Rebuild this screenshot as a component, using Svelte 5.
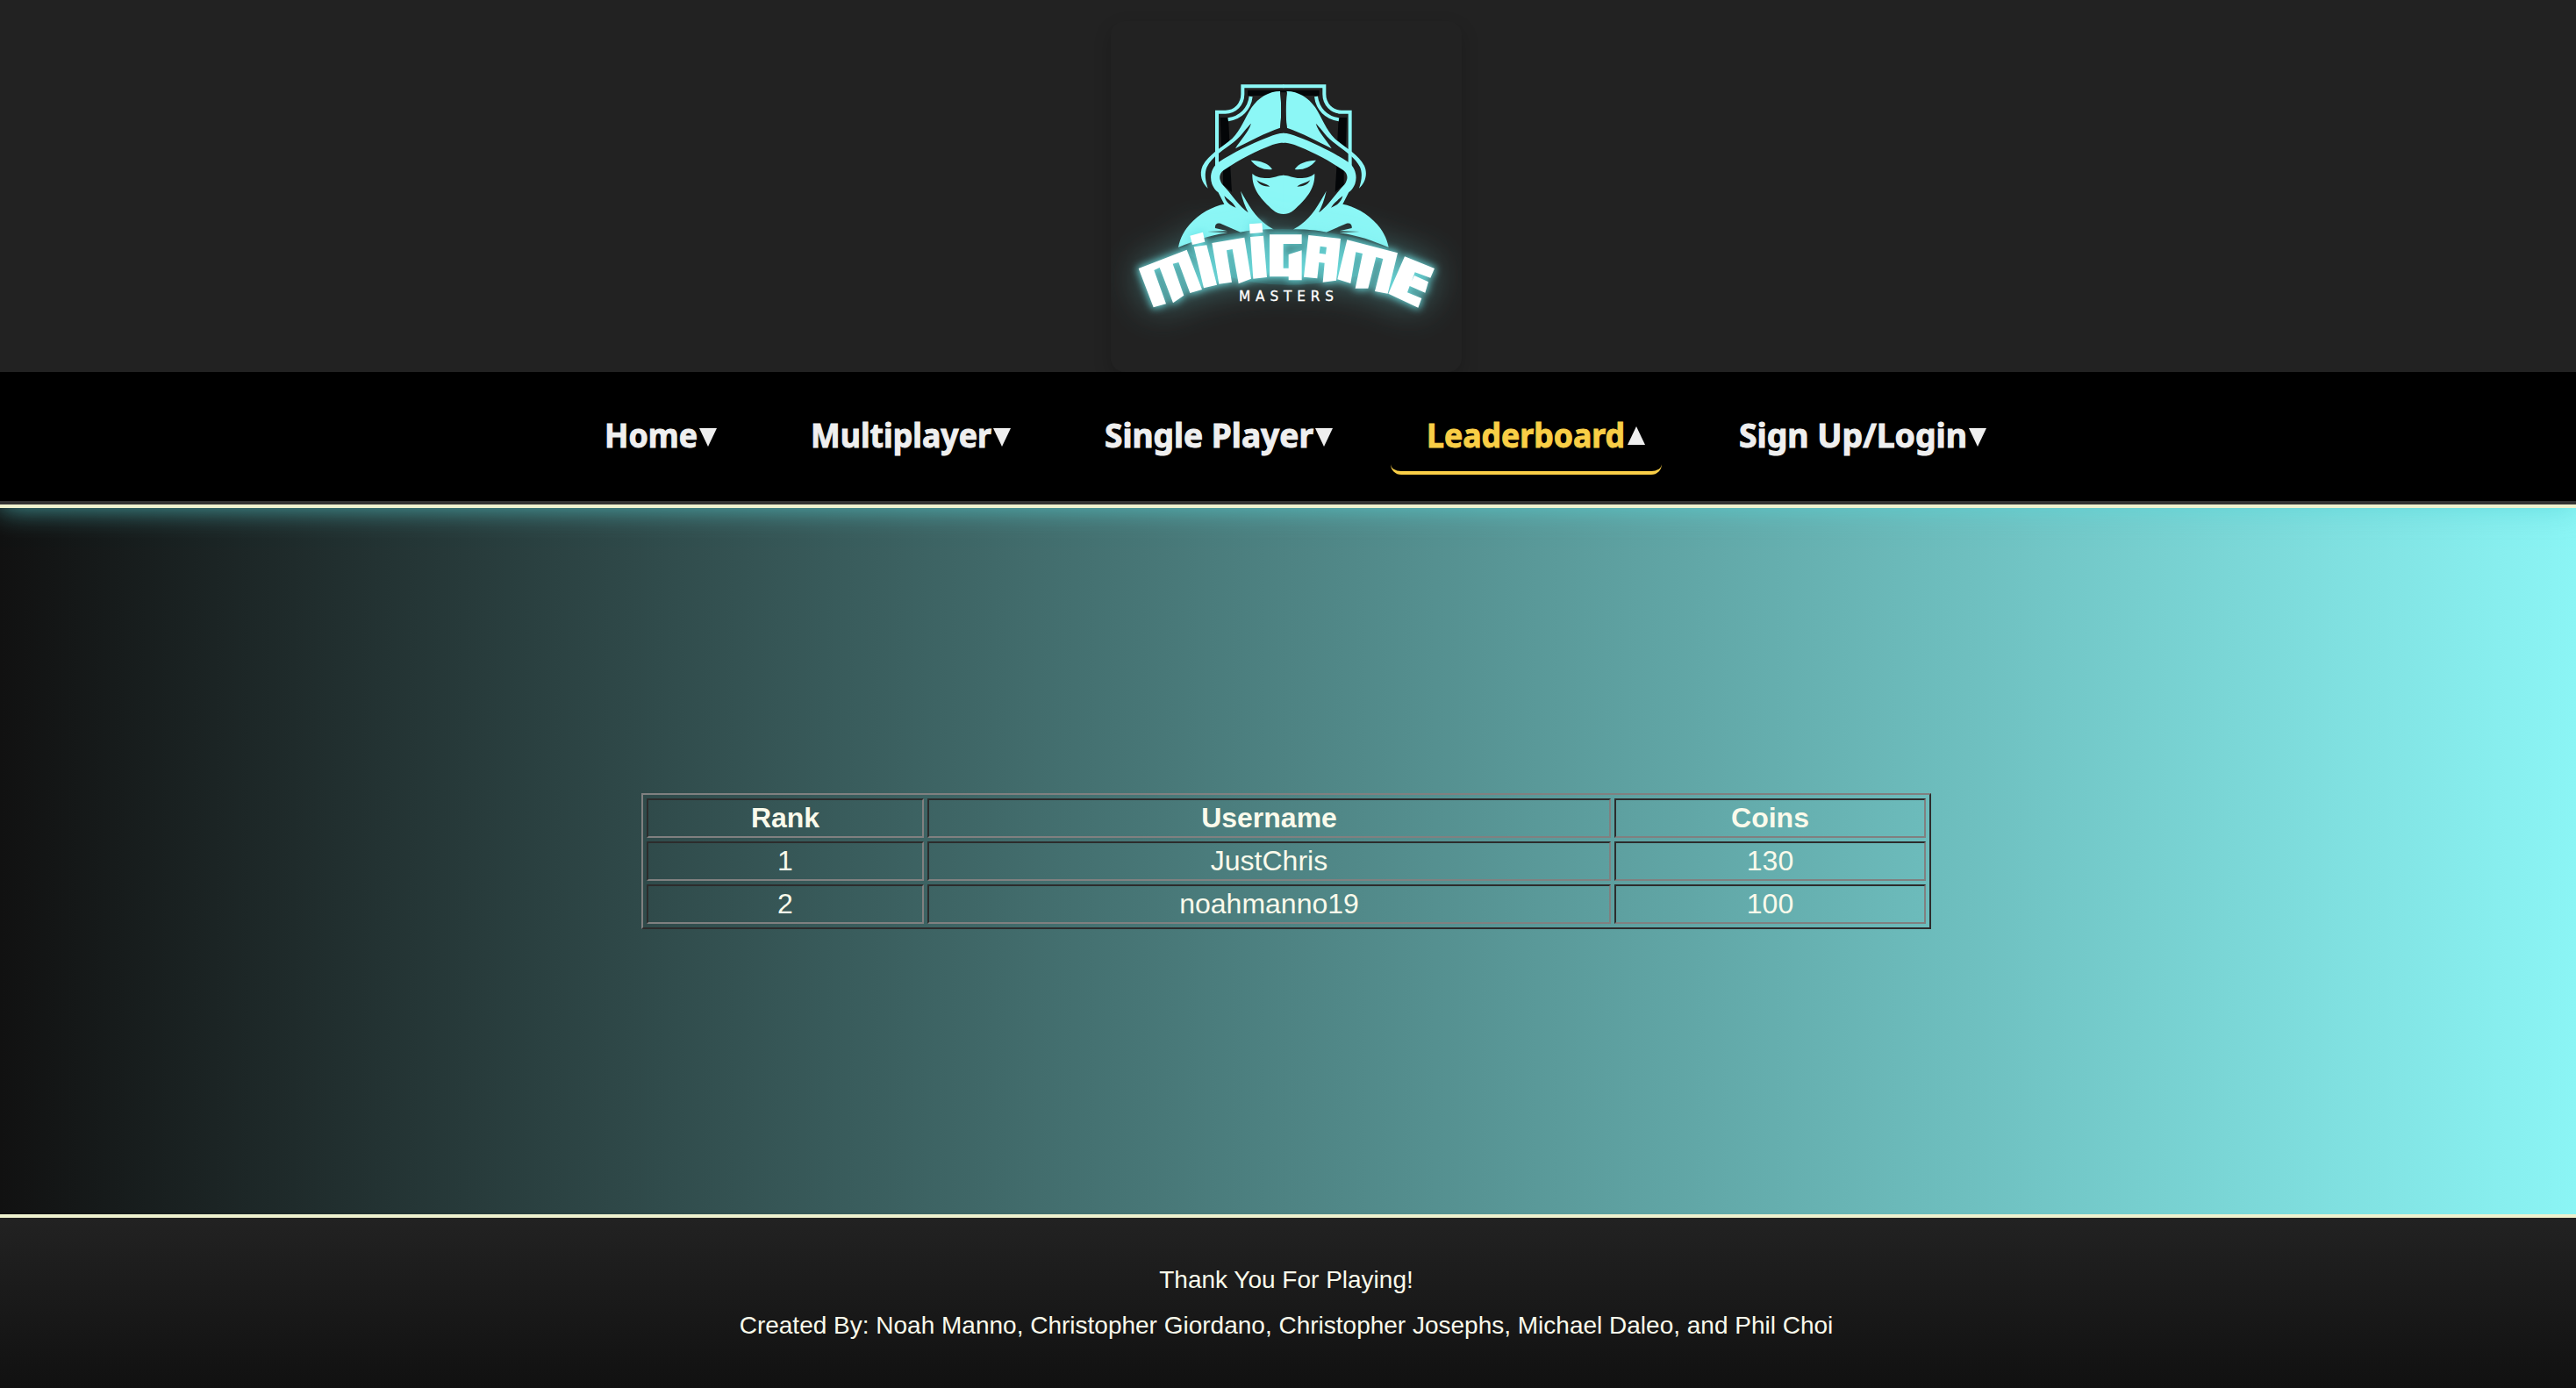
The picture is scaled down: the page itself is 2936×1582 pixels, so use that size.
<script>
  const navItems = [
    { label: 'Home', width: 104 },
    { label: 'Multiplayer', width: 204 },
    { label: 'Single Player', width: 236 },
    { label: 'Leaderboard', width: 224, active: true },
    { label: 'Sign Up/Login', width: 258 }
  ];

  const rows = [
    { rank: 1, username: 'JustChris', coins: 130 },
    { rank: 2, username: 'noahmanno19', coins: 100 }
  ];
</script>

<div class="page">
  <header>
    <div class="logo">
      <svg viewBox="0 0 1200 1200" role="img" aria-label="Minigame Masters">
        <defs>
          <filter id="glow" x="-30%" y="-80%" width="160%" height="260%">
            <feGaussianBlur in="SourceGraphic" stdDeviation="13" result="near" />
            <feGaussianBlur in="SourceGraphic" stdDeviation="60" result="far" />
            <feComponentTransfer in="far" result="farSoft"><feFuncA type="linear" slope="0.45" /></feComponentTransfer>
            <feComponentTransfer in="near" result="nearSoft"><feFuncA type="linear" slope="0.85" /></feComponentTransfer>
            <feMerge><feMergeNode in="farSoft" /><feMergeNode in="nearSoft" /></feMerge>
          </filter>
          <!-- left half of the emblem; mirrored for the right half -->
          <g id="half">
            <g fill="#040608">
              <path d="M468 237H592V255H468Z" />
              <path d="M374 330H402L406 410L378 440Z" />
              <path d="M384 500L408 485L414 585L384 560Z" />
            </g>
            <g fill="none" stroke="#8cf7f6" stroke-width="12">
              <path d="M592 223H451V250C451 285 425 311 392 311H363V495" />
              <path d="M479 258C474 300 445 330 401 337" />
            </g>
            <g fill="#8cf7f6">
              <path d="M579 240C540 240 505 262 482 295C457 334 446 371 415 402C382 431 335 455 314 495C301 524 312 554 332 572C324 548 319 521 329 499C346 463 391 438 423 412C449 390 466 362 480 350C470 383 442 407 426 436C470 412 530 382 579 365C584 330 584 277 579 240Z" />
              <path d="M592 383C574 383 560 388 541 396C480 419 417 451 369 482C344 500 337 531 346 557C354 577 367 585 367 585L388 626C330 636 246 690 231 774C290 750 330 734 400 724L330 720L399 718L357 708C355 696 362 690 375 692L444 722C490 713 530 712 558 713C500 682 478 640 444 581C450 610 460 635 470 655C440 635 412 590 381 558C369 540 369 523 386 510C442 472 500 443 553 423C568 417 580 416 592 416Z" />
              <path d="M479 476C510 477 540 486 552 507C525 510 498 501 479 476Z" />
              <path d="M592 527C572 527 558 537 534 537C514 537 497 534 484 522C482 578 518 612 554 646C566 657 578 660 592 660Z" />
            </g>
            <g fill="#222">
              <path d="M499 544C512 554 530 555 544 566C524 566 507 560 499 544Z" />
              <path d="M388 598C400 609 415 617 428 638C408 631 393 619 388 598Z" />
            </g>
          </g>
        </defs>
        <use href="#half" />
        <use href="#half" transform="translate(1181 0) scale(-1 1)" />
        <path fill="#222" d="M579 244C584 285 584 330 579 367H603C598 330 598 285 603 244Z" />
        <path fill="#26494b" d="M231 778Q591 644 951 778L850 870Q591 935 390 870Z" opacity=".75" />
        {#each ['glow', 'solid'] as layer}
          <g class={layer} fill-rule="evenodd">
            <path d="M95 846L260 782L312 918L271 930L232 825L212 830L250 938L213 964L167 843L148 852L189 967L146 979Z" />
            <path d="M271 734L315 722L322 755L279 765Z M284 772L328 766L363 902L318 913Z" />
            <path d="M346 759L457 740L480 881L437 898L416 780L396 784L414 893L370 899Z" />
            <path d="M474 694L517 691L520 723L476 727Z M477 738L522 734L534 876L487 881Z" />
            <path d="M543 730H653V762H590V845H608V798L653 784V886H608V874H543Z" />
            <path d="M676 732L786 744L771 887L725 893L731 827L712 825L706 880L660 875Z M716 770L738 773L735 797L713 794Z" />
            <path d="M808 748L981 793L947 932L903 924L931 813L907 807L880 914L836 914L861 795L838 790L820 897L775 883Z" />
            <path d="M1005 805L1107 846L1093 878L1040 859L1029 889L1038 870L1086 892L1075 929L1022 906L1014 928L1063 948L1051 980L949 932Z" />
          </g>
        {/each}
        <text x="438" y="957" class="masters" textLength="324" lengthAdjust="spacing">MASTERS</text>
      </svg>
    </div>
  </header>

  <nav>
    {#each navItems as item}
      <a class:active={item.active}>
        <svg class="label" width={item.width} height="48" viewBox="0 0 {item.width} 48">
          <text x="-2" y="35" textLength={item.width + 2} lengthAdjust="spacingAndGlyphs">{item.label}</text>
        </svg>
        <svg class="arrow" width="20" height="48" viewBox="0 0 20 48">
          <path d={item.active ? 'M0 32H20L10 11Z' : 'M0 13H20L10 34Z'} />
        </svg>
      </a>
    {/each}
  </nav>

  <main>
    <table>
      <thead>
        <tr><th class="rank">Rank</th><th class="user">Username</th><th class="coins">Coins</th></tr>
      </thead>
      <tbody>
        {#each rows as row}
          <tr><td>{row.rank}</td><td>{row.username}</td><td>{row.coins}</td></tr>
        {/each}
      </tbody>
    </table>
  </main>

  <footer>
    <p>Thank You For Playing!</p>
    <p>Created By: Noah Manno, Christopher Giordano, Christopher Josephs, Michael Daleo, and Phil Choi</p>
  </footer>
</div>

<style>
  :global(body) {
    margin: 0;
    background: #111;
  }
  .page {
    height: 1582px;
    display: flex;
    flex-direction: column;
    overflow: hidden;
    font-family: 'Liberation Sans', Arial, sans-serif;
    color: #fafaeb;
  }
  header {
    position: relative;
    z-index: 1;
    overflow: hidden;
    box-sizing: border-box;
    height: 424px;
    padding: 24px 4px 0 0;
    background: #222;
    display: flex;
    justify-content: center;
  }
  .logo {
    width: 400px;
    height: 400px;
    border-radius: 16px;
    box-shadow: 0 8px 20px rgba(0, 0, 0, 0.2);
  }
  .logo svg {
    display: block;
    width: 400px;
    height: 400px;
    border-radius: 16px;
  }
  .glow {
    fill: #6fe6e8;
    stroke: #6fe6e8;
    stroke-width: 10;
    filter: url(#glow);
  }
  .solid {
    fill: #fff;
  }
  .masters {
    font-family: 'DejaVu Sans', sans-serif;
    font-size: 46px;
    fill: #fff;
    stroke: #fff;
    stroke-width: 1;
  }
  nav {
    position: relative;
    box-sizing: border-box;
    height: 155px;
    padding: 34px 0 0 648px;
    display: flex;
    align-items: flex-start;
    gap: 47px;
    background: #000;
    border-bottom: 4px solid #eff2cf;
    box-shadow: inset 0 -4px #333, 0 0 30px rgba(88, 214, 216, 0.75);
  }
  a {
    box-sizing: border-box;
    height: 83px;
    padding: 17px 18px 0 43px;
    display: flex;
    gap: 2px;
    border-bottom: 4px solid transparent;
    border-radius: 12px;
  }
  a.active {
    border-bottom-color: #f9ce46;
  }
  .label {
    overflow: visible;
    font-family: 'Noto Sans', 'Open Sans', sans-serif;
    font-weight: 700;
    font-size: 38px;
    fill: #efefef;
    stroke: #efefef;
    stroke-width: 1;
  }
  .active .label {
    fill: #f9ce46;
    stroke: #f9ce46;
  }
  .arrow {
    margin-right: 1px;
    fill: #efefef;
  }
  .active .arrow {
    margin-left: 1px;
  }
  main {
    height: 805px;
    box-sizing: border-box;
    padding-right: 4px;
    display: flex;
    align-items: center;
    justify-content: center;
    background: linear-gradient(to right, #111, #8bf5f5);
  }
  table {
    box-sizing: border-box;
    width: 1470px;
    table-layout: fixed;
    border: 2px solid;
    border-color: #808080 #2c2c2c #2c2c2c #808080;
    border-spacing: 4px;
    font-size: 32px;
    text-align: center;
  }
  th,
  td {
    box-sizing: border-box;
    height: 45px;
    padding: 2px;
    line-height: 37px;
    border: 2px solid;
    border-color: #2c2c2c #808080 #808080 #2c2c2c;
  }
  .rank {
    width: 316px;
  }
  .user {
    width: 779px;
  }
  .coins {
    width: 355px;
  }
  footer {
    box-sizing: border-box;
    height: 198px;
    padding: 45px 4px 0 0;
    border-top: 4px solid #eff2cf;
    background: linear-gradient(#222, #111);
    text-align: center;
  }
  p {
    margin: 0;
    font-size: 28px;
    line-height: 52px;
  }
</style>
